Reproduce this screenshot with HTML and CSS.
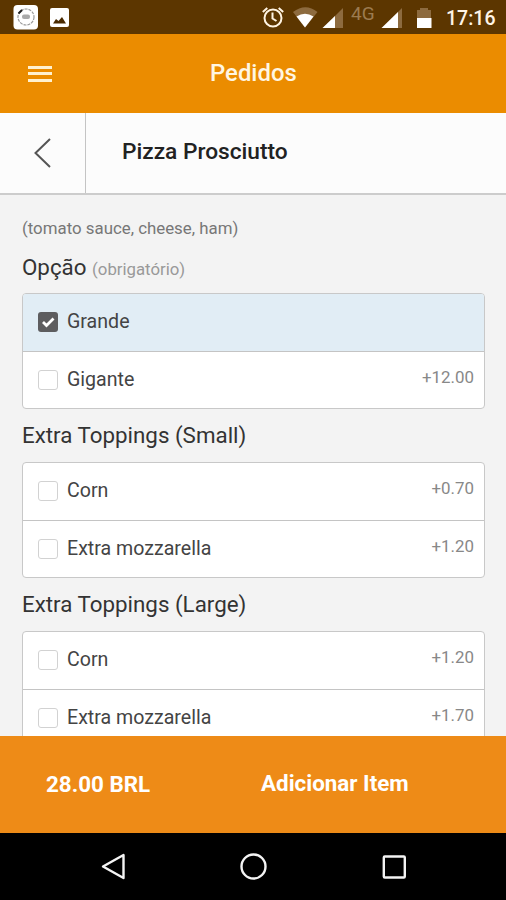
FILE: index.html
```html
<!DOCTYPE html>
<html lang="pt-BR">
<head>
<meta charset="utf-8">
<title>Pedidos</title>
<link rel="stylesheet" href="styles.css">
</head>
<body>
<div class="status">
  <svg class="status-icons" width="80" height="34" viewBox="0 0 80 34">
    <rect x="13.500" y="5" width="24.500" height="24.500" rx="4" fill="#fff"/>
    <circle cx="26" cy="17" r="8" fill="none" stroke="#999" stroke-width="1.200" stroke-dasharray="3 1"/>
    <path d="M18.500 13.500l3.500-3.500" stroke="#222" stroke-width="2"/>
    <rect x="22" y="14.500" width="8" height="4.500" rx="2" fill="#aaa"/>
    <rect x="50" y="8" width="19" height="19" rx="2" fill="#fff"/>
    <path d="M53 23.500l3-4.500 2.500 2 3.500-4 4 6.500z" fill="#4a2a00"/>
  </svg>
  <svg class="status-icons" width="186" height="34" viewBox="253 0 186 34">
    <g fill="none" stroke="#fff4e2" stroke-width="2">
      <circle cx="273" cy="18" r="8.500"/>
      <path d="M272.500 12.500v6l4 2.500M262.800 12l4.500-4M283.200 12l-4.500-4"/>
    </g>
    <path d="M293 12q12.500-9.500 24.500 0l-12.500 15.500z" fill="#8d6b3f"/>
    <path d="M296.500 16.500q8.500-5.500 17 0l-8.500 11z" fill="#fff"/>
    <path d="M343 8v20h-20z" fill="#8d6b3f"/>
    <path d="M335 16v12h-12.500z" fill="#fff"/>
    <path d="M402 8v20h-20z" fill="#8d6b3f"/>
    <path d="M398 12v16h-16.500z" fill="#fff"/>
    <path d="M420 8h8v2h3v8h-14v-8h3z" fill="#8d6b3f"/>
    <path d="M417 18h14.500v10h-14.500z" fill="#fff"/>
    <text class="network" x="351" y="19.500">4G</text>
  </svg>
  <span class="clock">17:16</span>
</div>
<header class="header">
  <div class="menu"><i></i><i></i><i></i></div>
  <h1>Pedidos</h1>
</header>
<div class="titlebar">
  <div class="back"><svg width="20" height="32" viewBox="0 0 20 32"><path d="M17 2L2.500 16 17 30" fill="none" stroke="#555" stroke-width="2"/></svg></div>
  <h2>Pizza Prosciutto</h2>
</div>
<main class="content">
  <p class="desc">(tomato sauce, cheese, ham)</p>
  <h3>Opção <small>(obrigatório)</small></h3>
  <div class="card">
    <div class="row selected"><span class="box"><svg width="20" height="20" viewBox="0 0 20 20"><path d="M5 10l3.500 3.500 7-7" fill="none" stroke="#fff" stroke-width="2.800"/></svg></span><span class="label">Grande</span></div>
    <div class="row"><span class="box"></span><span class="label">Gigante</span><span class="price">+12.00</span></div>
  </div>
  <h3>Extra Toppings (Small)</h3>
  <div class="card">
    <div class="row"><span class="box"></span><span class="label">Corn</span><span class="price">+0.70</span></div>
    <div class="row"><span class="box"></span><span class="label">Extra mozzarella</span><span class="price">+1.20</span></div>
  </div>
  <h3>Extra Toppings (Large)</h3>
  <div class="card">
    <div class="row"><span class="box"></span><span class="label">Corn</span><span class="price">+1.20</span></div>
    <div class="row"><span class="box"></span><span class="label">Extra mozzarella</span><span class="price">+1.70</span></div>
  </div>
</main>
<footer class="footer">
  <span class="total">28.00 BRL</span>
  <span class="add">Adicionar Item</span>
</footer>
<nav class="nav">
  <svg width="506" height="67" viewBox="0 833 506 67">
    <g fill="none" stroke="#f4f4f4" stroke-width="2.400" stroke-linejoin="round">
      <path d="M123.500 855v23l-20.500-11.500z"/>
      <circle cx="253.500" cy="866.500" r="12"/>
      <rect x="383.800" y="856.500" width="21" height="21" rx="1"/>
    </g>
  </svg>
</nav>
</body>
</html>
```
FILE: styles.css
```css
* { box-sizing: border-box; margin: 0; padding: 0; }
body {
  width: 506px;
  height: 900px;
  overflow: hidden;
  display: flex;
  flex-direction: column;
  background: #f3f3f3;
  font-family: Roboto, "Liberation Sans", sans-serif;
  color: #333;
}
svg { display: block; flex: none; }
.status { height: 34px; flex: none; background: #5c3600; display: flex; }
.status-icons + .status-icons { margin-left: 173px; }
.network { font-size: 19px; font-weight: 400; fill: #9b7b50; }
.clock { margin-left: 7px; line-height: 37px; font-size: 19.5px; font-weight: 500; color: #fff4e6; }
.header { height: 79px; flex: none; background: #eb8c00; display: flex; align-items: center; }
.menu { margin-left: 28px; width: 24px; display: grid; gap: 3.5px; }
.menu i { height: 3px; background: #fff1cf; }
.header h1 { margin: -2px 0 0 158px; font-size: 23.9px; font-weight: 500; color: #fff6e2; line-height: 30px; }
.titlebar { height: 82px; flex: none; background: #fcfcfc; display: flex; border-bottom: 2px solid #ccc; }
.back { width: 86px; border-right: 1px solid #c4c4c4; padding: 24px 0 0 33px; }
.titlebar h2 { margin-left: 36px; line-height: 78px; font-size: 22.7px; font-weight: 500; color: #222; }
.content { flex: 1; min-height: 0; overflow: hidden; padding: 21px 21px 0 22px; }
.desc { font-size: 16.85px; line-height: 24px; color: #777; }
h3 { height: 53px; line-height: 53px; font-size: 22.35px; font-weight: 400; color: #333; white-space: nowrap; }
.desc + h3 { line-height: 55px; }
h3 small { font-size: 16.8px; color: #999; }
.card { border: 1px solid #c8c8c8; border-radius: 4px; background: #fff; overflow: hidden; }
.row { height: 57px; display: flex; padding-left: 15px; }
.row + .row { border-top: 1px solid #c4c4c4; }
.selected { background: #e1edf5; }
.box { width: 20px; height: 20px; margin-top: 18px; border: 1px solid #d2d2d2; border-radius: 3px; flex: none; }
.selected .box { background: #5d5d5f; border: 0; }
.label { margin-left: 9px; line-height: 55px; font-size: 19.6px; color: #444; }
.row + .row .label { line-height: 56px; }
.price { margin-left: auto; margin-right: 10px; line-height: 51px; font-size: 16.9px; color: #888; }
.footer { height: 97px; flex: none; background: #ee8b17; display: flex; color: #fff; font-weight: 700; font-size: 22.4px; line-height: 95px; }
.total { width: 215px; margin-left: 46px; line-height: 97px; }
.nav { height: 67px; flex: none; background: #000; }
```
